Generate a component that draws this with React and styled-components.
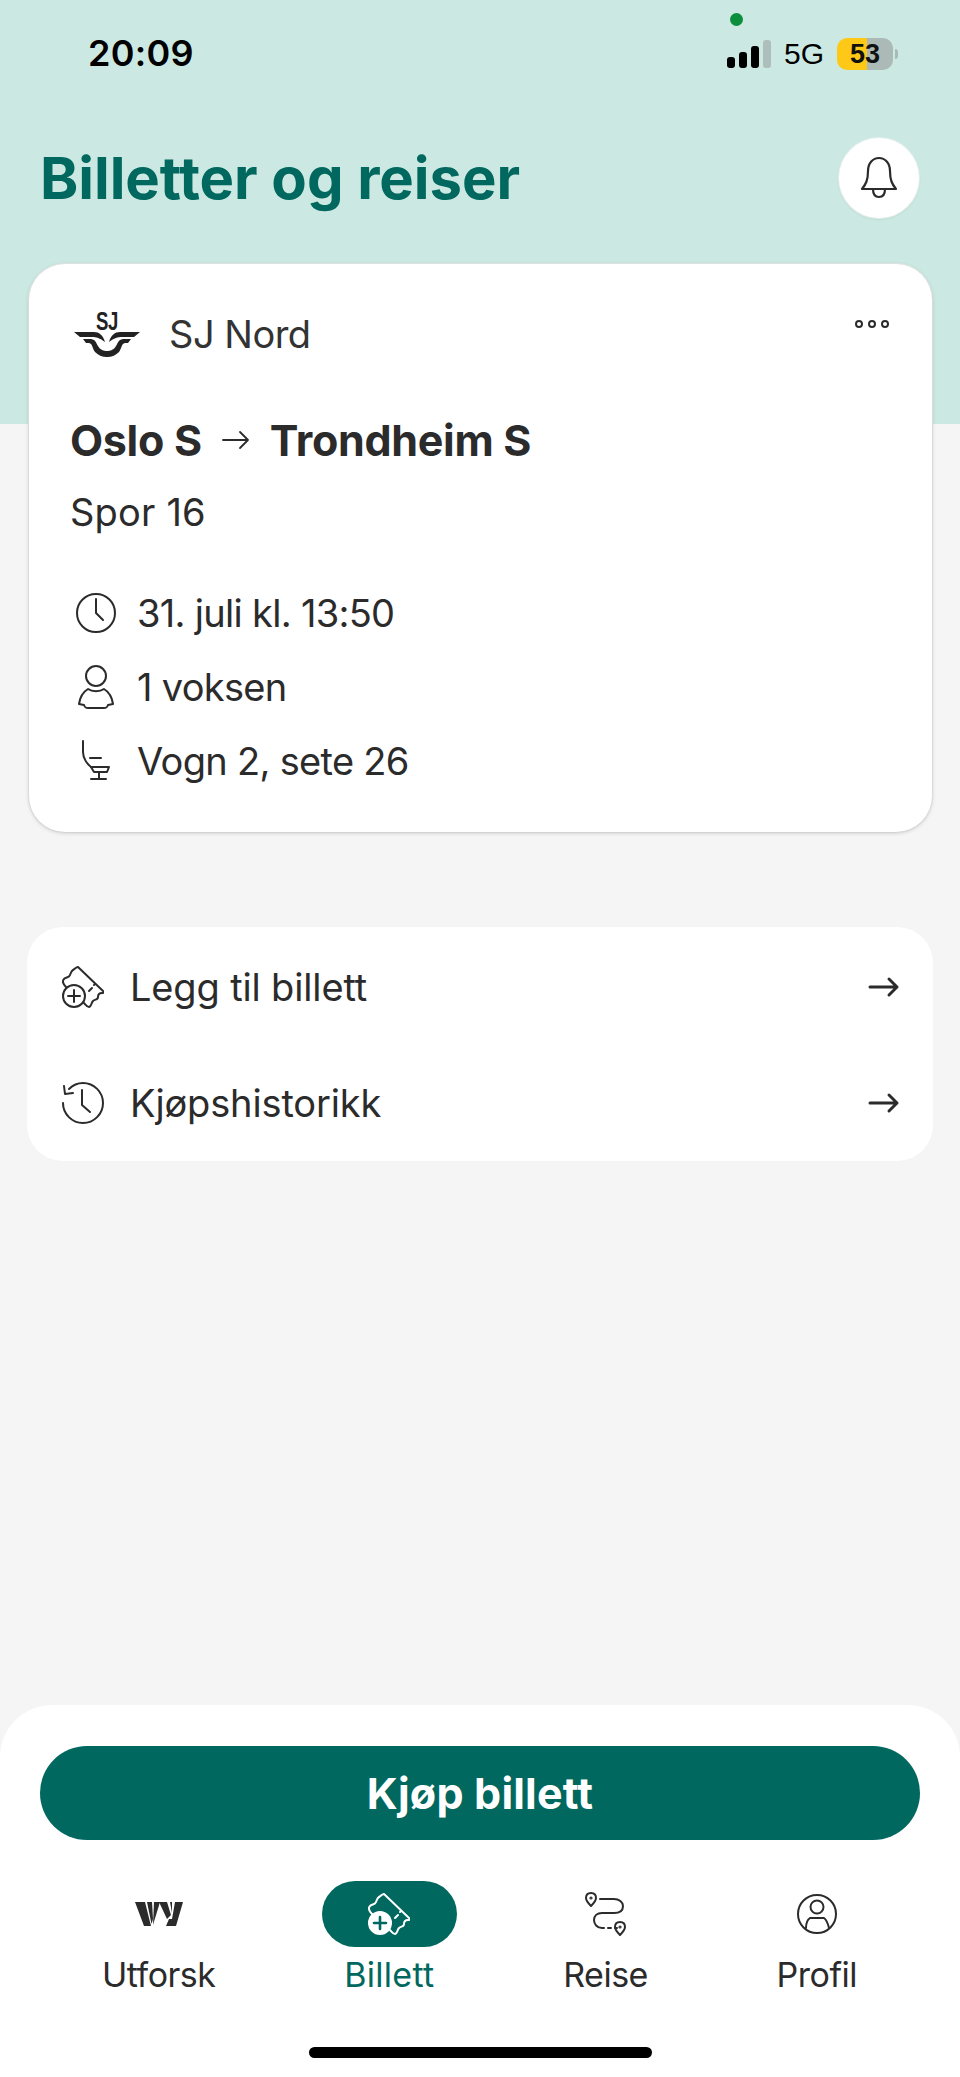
import React from "react";
import styled, { createGlobalStyle } from "styled-components";

const Global = createGlobalStyle`
  html, body { margin: 0; padding: 0; }
  * { box-sizing: border-box; }
`;

const ink = "#2b2b2c";
const green = "#00685e";
const sans = `Inter, "Noto Sans", sans-serif`;

const Page = styled.div`
  width: 960px;
  height: 2077px;
  display: flex;
  flex-direction: column;
  font-family: ${sans};
  color: ${ink};
  overflow: hidden;
  background: linear-gradient(#cbe9e2 0 424px, #f5f5f5 424px);
`;

const StatusBar = styled.div`
  height: 108px;
  padding: 30px 67px 0 88px;
  display: flex;
  justify-content: space-between;
  align-items: flex-start;
  position: relative;
`;
const Clock = styled.div`
  font: 600 36px/46px Inter, sans-serif;
  color: #000;
  letter-spacing: 0.3px;
`;
const StatusRight = styled.div`
  display: flex;
  align-items: center;
  gap: 13px;
  margin-top: 8px;
`;
const RecDot = styled.span`
  position: absolute;
  left: 730px;
  top: 13px;
  width: 13px;
  height: 13px;
  border-radius: 50%;
  background: #0b8f3c;
`;
const Signal = styled.div`
  display: flex;
  align-items: flex-end;
  gap: 4px;
  height: 28px;
`;
const Bar = styled.span`
  width: 8px;
  height: ${(p) => p.$h}px;
  border-radius: 3px;
  background: ${(p) => (p.$off ? "#aebfbb" : "#000")};
`;
const Net = styled.span`
  font: 400 30px/32px "Liberation Sans", sans-serif;
  color: #000;
`;
const Battery = styled.div`
  width: 56px;
  height: 32px;
  border-radius: 10px;
  background: linear-gradient(90deg, #fdc916 0 30px, #abbab7 30px);
  font: 700 27px/32px "Liberation Sans", sans-serif;
  color: #111;
  text-align: center;
  position: relative;
  &::after {
    content: "";
    position: absolute;
    right: -5px;
    top: 11px;
    width: 3px;
    height: 10px;
    border-radius: 0 3px 3px 0;
    background: #abbab7;
  }
`;

const TitleRow = styled.div`
  display: flex;
  justify-content: space-between;
  align-items: center;
  padding: 0 41px 0 40px;
  height: 110px;
  margin-top: 15px;
`;
const Title = styled.h1`
  margin: 0;
  font: 700 58px/70px ${sans};
  color: ${green};
  letter-spacing: -0.05px;
`;
const BellButton = styled.div`
  width: 80px;
  height: 80px;
  border-radius: 50%;
  background: #fff;
  box-shadow: 0 0 0 1px #e4efec, 0 1px 3px rgba(0, 0, 0, 0.12);
  display: flex;
  align-items: center;
  justify-content: center;
`;

const TicketCard = styled.section`
  margin: 31px 28px 0 29px;
  height: 568px;
  background: #fff;
  border-radius: 36px;
  padding: 46px 30px 0 41px;
  box-shadow: 0 1px 4px rgba(0, 0, 0, 0.18), 0 0 0 1px #e9eeec;
`;
const Operator = styled.div`
  display: flex;
  align-items: center;
  height: 48px;
  justify-content: space-between;
`;
const OperatorLeft = styled.div`
  display: flex;
  align-items: center;
  gap: 27px;
  font: 400 38px/50px ${sans};
  letter-spacing: -0.5px;
  color: #333;
`;
const LogoSvg = styled.svg`
  margin: -4px 0 0 2px;
`;
const MoreDots = styled.div`
  display: flex;
  gap: 5px;
  align-self: flex-start;
  margin-top: 10px;
  margin-right: 13px;
`;
const MoreDot = styled.span`
  width: 8px;
  height: 8px;
  border-radius: 50%;
  border: 2px solid ${ink};
`;
const Route = styled.div`
  display: flex;
  align-items: center;
  margin-top: 56px;
  gap: 20px;
  font: 700 43px/52px ${sans};
  letter-spacing: -0.3px;
`;
const Platform = styled.div`
  margin-top: 22px;
  font: 400 38px/48px ${sans};
  letter-spacing: 0.2px;
`;
const Facts = styled.div`
  margin-top: 53px;
  display: flex;
  flex-direction: column;
  gap: 26px;
`;
const Fact = styled.div`
  display: flex;
  align-items: center;
  height: 48px;
  font: 400 38px/48px ${sans};
  letter-spacing: -0.7px;
`;
const FactIcon = styled.span`
  width: 67px;
  height: 48px;
  flex: none;
  display: flex;
  align-items: center;
  justify-content: center;
  padding-right: 16px;
`;

const LinksCard = styled.section`
  margin: 95px 27px 0 27px;
  height: 234px;
  background: #fff;
  border-radius: 36px;
  padding: 2px 33px 0 35px;
  display: flex;
  flex-direction: column;
`;
const LinkRow = styled.div`
  flex: 1;
  display: flex;
  align-items: center;
  gap: 26px;
  font: 400 38px/48px ${sans};
  letter-spacing: -0.15px;
  & > svg:last-child {
    margin-left: auto;
  }
`;

const Sheet = styled.div`
  margin-top: auto;
  height: 372px;
  background: #fff;
  border-radius: 52px 52px 0 0;
  padding: 41px 40px 0;
  display: flex;
  flex-direction: column;
`;
const BuyButton = styled.button`
  height: 94px;
  flex: none;
  border: 0;
  border-radius: 47px;
  background: ${green};
  color: #fff;
  font: 700 43px/54px ${sans};
  letter-spacing: 0.2px;
`;
const Nav = styled.nav`
  margin: 41px 63px 0 62px;
  display: flex;
  justify-content: space-between;
`;
const NavItem = styled.div`
  display: flex;
  flex-direction: column;
  align-items: center;
  gap: 7px;
  font: 400 34px/42px ${sans};
  letter-spacing: ${(p) => (p.$active ? "0.3px" : "-0.5px")};
  color: ${(p) => (p.$active ? green : ink)};
`;
const NavIcon = styled.div`
  width: ${(p) => (p.$active ? 135 : 66)}px;
  height: 66px;
  margin: 0 ${(p) => (p.$active ? -30 : 0)}px;
  border-radius: 33px;
  background: ${(p) => (p.$active ? green : "transparent")};
  display: flex;
  align-items: center;
  justify-content: center;
`;
const HomeBar = styled.div`
  width: 343px;
  height: 11px;
  border-radius: 6px;
  background: #000;
  align-self: center;
  margin-top: 51px;
`;

const Stroke = (p) => (
  <svg fill="none" stroke={ink} strokeLinecap="round" strokeLinejoin="round" {...p} />
);

const Bell = () => (
  <Stroke width="40" height="44" viewBox="0 0 40 44" strokeWidth="2.2">
    <path d="M3 33 C7 28 9 24 9 15 C9 7 14 2 20 2 C26 2 31 7 31 15 C31 24 33 28 37 33 Z" />
    <path d="M14 33 C14 38 16 41 20 41 C24 41 26 38 26 33" />
  </Stroke>
);

const SjLogo = () => (
  <LogoSvg width="70" height="54" viewBox="0 -4 70 54">
    <text x="35" y="21" textAnchor="middle" fontFamily="Liberation Sans, sans-serif" fontWeight="700" fontSize="25" textLength="22" lengthAdjust="spacingAndGlyphs" fill="#222">SJ</text>
    <g fill="#222">
      <path d="M2 23 L22 23 C27 23 31 26 33 33 C28 29 24 28 20 28 L8 28 Z" />
      <path d="M68 23 L48 23 C43 23 39 26 37 33 C42 29 46 28 50 28 L62 28 Z" />
      <path d="M11 30 L19 30 C24 31 24 34 26 37 C28 41 32 42 35 42 C38 42 42 41 44 37 C46 34 46 31 51 30 L59 30 L56 34 L53 34 C49 35 50 39 47 43 C44 46 40 48 35 48 C30 48 26 46 23 43 C20 39 21 35 17 34 L14 34 Z" />
    </g>
  </LogoSvg>
);

const ThinArrow = () => (
  <Stroke width="28" height="22" viewBox="0 0 28 22" strokeWidth="1.8">
    <path d="M1 11 H26 M18 3 L26 11 L18 19" />
  </Stroke>
);

const ClockIcon = () => (
  <Stroke width="40" height="40" viewBox="0 0 40 40" strokeWidth="2">
    <circle cx="20" cy="20" r="19" />
    <path d="M20 6 V20 L27 27" />
  </Stroke>
);
const PersonIcon = () => (
  <Stroke width="36" height="44" viewBox="0 0 36 44" strokeWidth="2">
    <circle cx="18" cy="11" r="10" />
    <path d="M10 24 C5 27 2 32 1 39 L6 40 C7 43 8 43 10 43 H26 C28 43 29 43 30 40 L35 39 C34 32 31 27 26 24 C22 27 14 27 10 24 Z" />
  </Stroke>
);
const SeatIcon = () => (
  <Stroke width="30" height="42" viewBox="0 0 30 42" strokeWidth="2">
    <path d="M2 1 V12 C2 18 6 24 10 27" />
    <path d="M9 18 H20" />
    <path d="M10 27 H28 L26 32 H13 Z" />
    <path d="M18 32 V39 M10 39 H25" />
  </Stroke>
);
const TicketPlus = ({ color = ink, filled }) => (
  <svg width="42" height="42" viewBox="0 0 42 42" fill="none" stroke={color} strokeWidth="2" strokeLinecap="round" strokeLinejoin="round">
    <path d="M4 21 C1 18 0 15 2 13 C4 11 7 12 8 9 C9 7 9 5 11 4 C13 3 14 1 16 1 L41 25 C42 26 42 27 40 27 C38 27 36 28 36 31 C36 34 33 33 31 35 C29 37 30 40 27 41 C25 41 24 39 22 37" />
    <path d="M27 25 L30 22 M32 19 L33 18" />
    <circle cx="12" cy="30" r="11" fill={filled ? color : "none"} />
    <path d="M12 24 V36 M6 30 H18" stroke={filled ? "#00685e" : color} strokeWidth={filled ? 2.6 : 2} />
  </svg>
);
const HistoryIcon = () => (
  <Stroke width="42" height="42" viewBox="0 0 42 42" strokeWidth="2">
    <path d="M7 7 C11 3 16 1 21 1 C32 1 41 10 41 21 C41 32 32 41 21 41 C10 41 1 32 1 21" />
    <path d="M2 4 L3 12 L11 11" />
    <path d="M20 8 V23 L28 30" />
  </Stroke>
);
const ListArrow = () => (
  <Stroke width="32" height="24" viewBox="0 0 32 24" strokeWidth="3">
    <path d="M2 12 H29 M21 4 L29 12 L21 20" />
  </Stroke>
);
const VyLogo = () => (
  <svg width="48" height="24" viewBox="0 0 48 24" fill={ink}>
    <path d="M0 0 H10 L16 24 H9 Z" />
    <path d="M12 0 H17 L18 17 L16.5 22 Z" />
    <path d="M19 0 H25 L18 23 Z" />
    <path d="M24 0 H32 L36 13 L32 17 Z" />
    <path d="M35 0 H37 L37 11 Z" />
    <path d="M40 0 H48 L41 24 H31 L34 17 H37 Z" />
  </svg>
);
const RouteIcon = () => (
  <Stroke width="42" height="44" viewBox="0 0 42 44" strokeWidth="2">
    <path d="M6 1 C9 1 11 3 11 6 C11 9 8 12 6 14 C4 12 1 9 1 6 C1 3 3 1 6 1 Z" />
    <circle cx="6" cy="6" r="0.6" />
    <path d="M15 7 H29 C34 7 38 10 38 14 C38 19 34 21 29 21 H17 C12 21 9 24 9 28 C9 32 12 36 17 36 H19" />
    <path d="M23 36 H26 M30 36 H32" />
    <path d="M35 30 C38 30 40 32 40 35 C40 38 37 41 35 43 C33 41 30 38 30 35 C30 32 32 30 35 30 Z" />
    <circle cx="35" cy="35" r="0.6" />
  </Stroke>
);
const ProfileIcon = () => (
  <Stroke width="40" height="40" viewBox="0 0 40 40" strokeWidth="2">
    <circle cx="20" cy="20" r="19" />
    <circle cx="20" cy="13" r="6.5" />
    <path d="M9 34 C9 30 10 26 13 24 H27 C30 26 31 30 32 34" />
  </Stroke>
);

export default function App() {
  return (
    <Page>
      <Global />
      <StatusBar>
        <Clock>20:09</Clock>
        <RecDot />
        <StatusRight>
          <Signal>
            <Bar $h={11} />
            <Bar $h={16} />
            <Bar $h={22} />
            <Bar $h={28} $off />
          </Signal>
          <Net>5G</Net>
          <Battery>53</Battery>
        </StatusRight>
      </StatusBar>

      <TitleRow>
        <Title>Billetter og reiser</Title>
        <BellButton>
          <Bell />
        </BellButton>
      </TitleRow>

      <TicketCard>
        <Operator>
          <OperatorLeft>
            <SjLogo />
            SJ Nord
          </OperatorLeft>
          <MoreDots>
            <MoreDot />
            <MoreDot />
            <MoreDot />
          </MoreDots>
        </Operator>
        <Route>
          <span>Oslo S</span>
          <ThinArrow />
          <span>Trondheim S</span>
        </Route>
        <Platform>Spor 16</Platform>
        <Facts>
          <Fact><FactIcon><ClockIcon /></FactIcon>31. juli kl. 13:50</Fact>
          <Fact><FactIcon><PersonIcon /></FactIcon>1 voksen</Fact>
          <Fact><FactIcon><SeatIcon /></FactIcon>Vogn 2, sete 26</Fact>
        </Facts>
      </TicketCard>

      <LinksCard>
        <LinkRow><TicketPlus />Legg til billett<ListArrow /></LinkRow>
        <LinkRow><HistoryIcon />Kjøpshistorikk<ListArrow /></LinkRow>
      </LinksCard>

      <Sheet>
        <BuyButton>Kjøp billett</BuyButton>
        <Nav>
          <NavItem>
            <NavIcon><VyLogo /></NavIcon>
            Utforsk
          </NavItem>
          <NavItem $active>
            <NavIcon $active><TicketPlus color="#fff" filled /></NavIcon>
            Billett
          </NavItem>
          <NavItem>
            <NavIcon><RouteIcon /></NavIcon>
            Reise
          </NavItem>
          <NavItem>
            <NavIcon><ProfileIcon /></NavIcon>
            Profil
          </NavItem>
        </Nav>
        <HomeBar />
      </Sheet>
    </Page>
  );
}
